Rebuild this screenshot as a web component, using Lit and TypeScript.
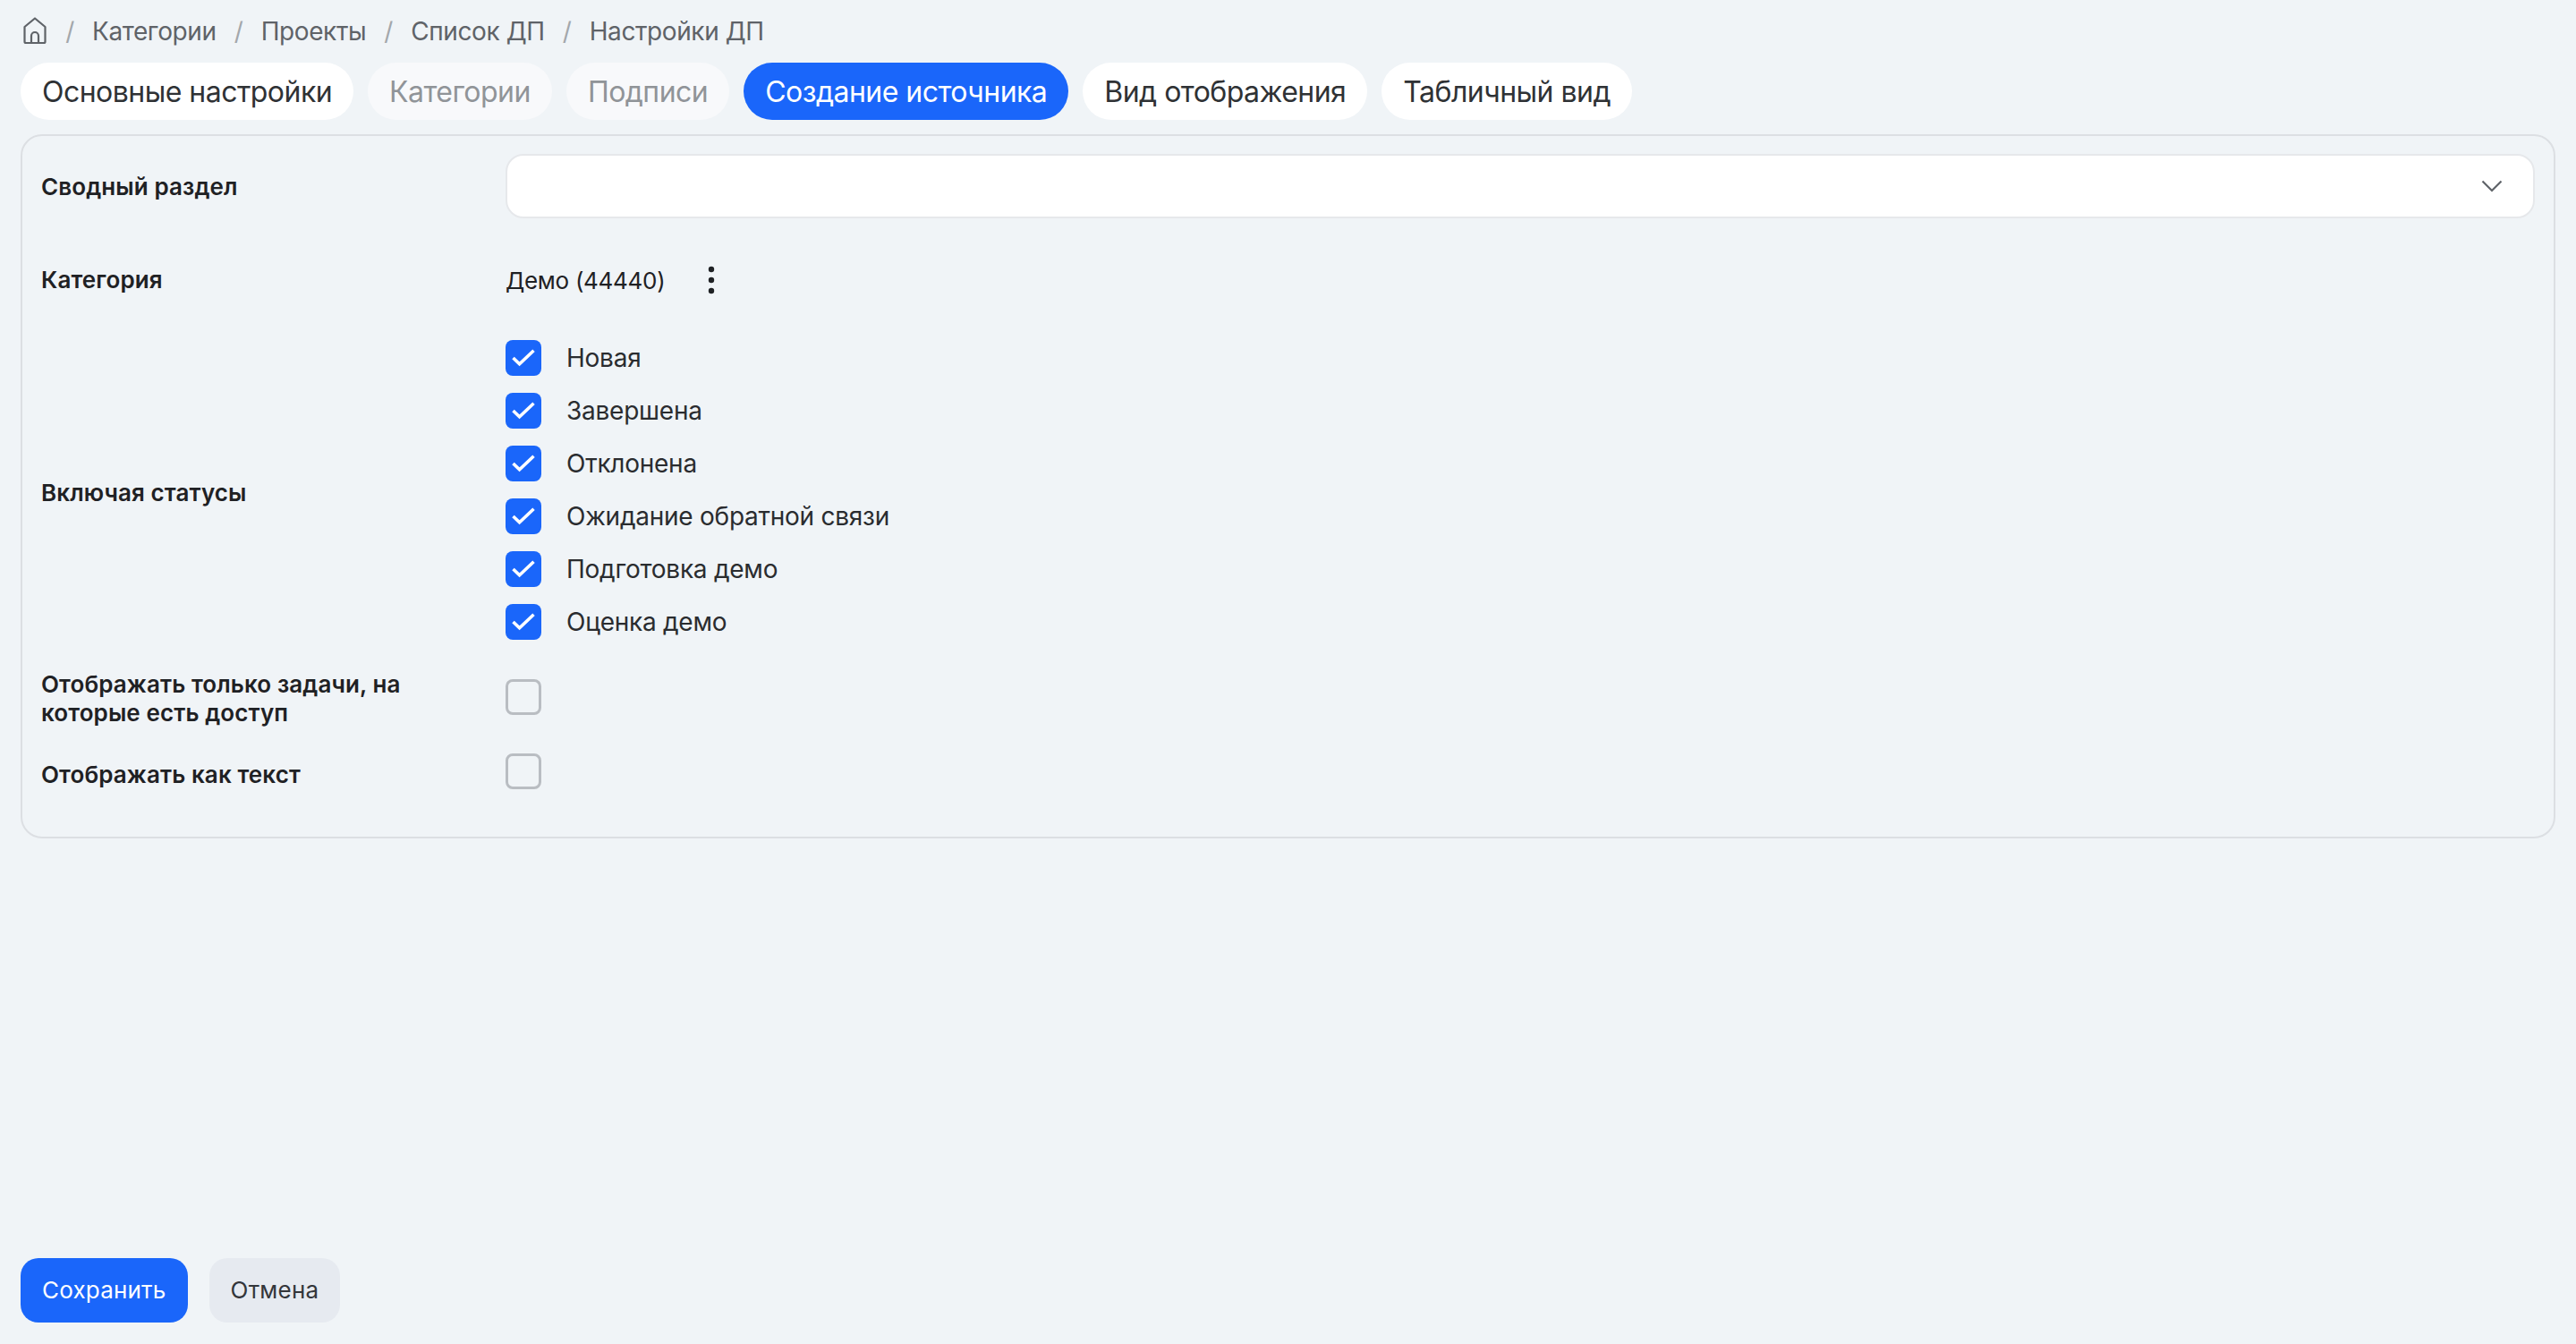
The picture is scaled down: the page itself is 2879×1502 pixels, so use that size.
import { LitElement, html, css } from 'lit';
import { customElement } from 'lit/decorators.js';

const crumbs = ['Категории', 'Проекты', 'Список ДП', 'Настройки ДП'];
const tabs = [
  { label: 'Основные настройки' },
  { label: 'Категории', kind: 'disabled' },
  { label: 'Подписи', kind: 'disabled' },
  { label: 'Создание источника', kind: 'active' },
  { label: 'Вид отображения' },
  { label: 'Табличный вид' },
];
const statuses = ['Новая', 'Завершена', 'Отклонена', 'Ожидание обратной связи', 'Подготовка демо', 'Оценка демо'];

@customElement('app-root')
export class AppRoot extends LitElement {
  static styles = css`
    :host {
      display: flex;
      flex-direction: column;
      box-sizing: border-box;
      height: 100vh;
      padding: 0 23px 24px;
      background: #f0f4f7;
      color: #1f2124;
      font-family: Inter, 'Noto Sans', sans-serif;
      font-size: 28px;
    }
    .crumbs {
      display: flex;
      align-items: center;
      height: 70px;
      color: #5f6368;
      line-height: 34px;
      letter-spacing: -0.4px;
    }
    .home {
      display: block;
      width: 32px;
      height: 32px;
      margin: -1px -2px 0 0;
    }
    .sep {
      width: 50px;
      text-align: center;
      color: #a3a7ab;
    }
    .tabs {
      display: flex;
      gap: 16px;
    }
    .tab {
      height: 64px;
      padding: 0 24px;
      border-radius: 32px;
      background: #fff;
      color: #2f3235;
      font-size: 32px;
      letter-spacing: -0.53px;
      line-height: 66px;
    }
    .tab.disabled {
      background: #f8f9fb;
      color: #909498;
    }
    .tab.active {
      background: #1a66fa;
      color: #fff;
    }
    .card {
      box-sizing: border-box;
      height: 787px;
      margin-top: 16px;
      padding: 20px 21px 0;
      border: 2px solid #dcdfe3;
      border-radius: 24px;
    }
    .row {
      display: grid;
      grid-template-columns: 519px 1fr;
      align-items: center;
    }
    .label {
      font-size: 26px;
      font-weight: 600;
      line-height: 32px;
      letter-spacing: 0.1px;
    }
    .label.first {
      padding-top: 2px;
    }
    .select {
      display: flex;
      align-items: center;
      justify-content: flex-end;
      box-sizing: border-box;
      height: 72px;
      padding-right: 34px;
      border: 2px solid #e6e8eb;
      border-radius: 20px;
      background: #fff;
    }
    .select svg {
      display: block;
      width: 24px;
      height: 14px;
    }
    .row.category {
      height: 48px;
      margin-top: 45px;
    }
    .value {
      display: flex;
      align-items: center;
      font-size: 26px;
      letter-spacing: -0.3px;
    }
    .dots {
      display: block;
      width: 14px;
      height: 36px;
      margin-left: 45px;
    }
    .row.statuses {
      margin-top: 43px;
    }
    .row.statuses .label {
      padding-top: 6px;
    }
    .list {
      display: flex;
      flex-direction: column;
      gap: 19px;
    }
    .option {
      display: flex;
      align-items: center;
      gap: 28px;
      height: 40px;
      color: #2a2c2f;
      letter-spacing: -0.25px;
    }
    .box {
      display: block;
      flex: none;
      box-sizing: border-box;
      width: 40px;
      height: 40px;
      border: 3px solid #b9bdc2;
      border-radius: 8px;
    }
    .box.on {
      border: none;
      background: #1a66fa;
    }
    .box svg {
      display: block;
      width: 40px;
      height: 40px;
    }
    .row.access {
      margin-top: 34px;
    }
    .row.access .box {
      margin-top: -4px;
    }
    .row.plain {
      margin-top: 37px;
    }
    .row.plain .box {
      margin-top: -8px;
    }
    .actions {
      display: flex;
      gap: 24px;
      margin-top: auto;
    }
    .btn {
      height: 72px;
      padding: 0 24px;
      border-radius: 20px;
      background: #e6eaf0;
      color: #33363a;
      font-size: 26px;
      letter-spacing: 0.2px;
      line-height: 72px;
    }
    .btn.primary {
      background: #1a66fa;
      color: #fff;
    }
  `;

  render() {
    return html`
      <div class="crumbs">
        <svg class="home" viewBox="0 0 32 32" fill="none" stroke="#5f6368" stroke-width="2.2" stroke-linejoin="round">
          <path d="M4.5 11 16 1.5 27.5 11V27.5a1.5 1.5 0 0 1-1.5 1.5H6a1.5 1.5 0 0 1-1.5-1.5Z" />
          <path d="M12 29V21a4 4 0 0 1 8 0v8" />
        </svg>
        ${crumbs.map((c) => html`<span class="sep">/</span><span>${c}</span>`)}
      </div>
      <div class="tabs">
        ${tabs.map((t) => html`<div class="tab ${t.kind ?? ''}">${t.label}</div>`)}
      </div>
      <div class="card">
        <div class="row">
          <div class="label first">Сводный раздел</div>
          <div class="select">
            <svg viewBox="0 0 24 14" fill="none" stroke="#5f6368" stroke-width="2.2">
              <path d="M1.5 1.5 12 12 22.5 1.5" />
            </svg>
          </div>
        </div>
        <div class="row category">
          <div class="label">Категория</div>
          <div class="value">
            <span>Демо (44440)</span>
            <svg class="dots" viewBox="0 0 14 36" fill="#1f2124">
              <circle cx="7" cy="6" r="3.2" />
              <circle cx="7" cy="18" r="3.2" />
              <circle cx="7" cy="30" r="3.2" />
            </svg>
          </div>
        </div>
        <div class="row statuses">
          <div class="label">Включая статусы</div>
          <div class="list">
            ${statuses.map(
              (s) => html`<div class="option">
                <span class="box on">
                  <svg viewBox="0 0 40 40" fill="none" stroke="#fff" stroke-width="3.6">
                    <path d="M8.5 20 15.6 26.8 31.5 11.8" />
                  </svg>
                </span>
                <span>${s}</span>
              </div>`
            )}
          </div>
        </div>
        <div class="row access">
          <div class="label">Отображать только задачи, на<br />которые есть доступ</div>
          <span class="box"></span>
        </div>
        <div class="row plain">
          <div class="label">Отображать как текст</div>
          <span class="box"></span>
        </div>
      </div>
      <div class="actions">
        <div class="btn primary">Сохранить</div>
        <div class="btn">Отмена</div>
      </div>
    `;
  }
}
